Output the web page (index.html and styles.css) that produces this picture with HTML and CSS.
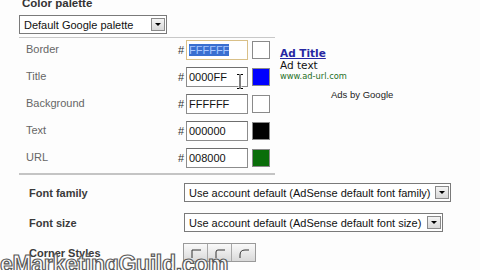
FILE: index.html
```html
<!DOCTYPE html>
<html>
<head>
    <title>Ad style</title>
    <link rel="stylesheet" href="styles.css">
</head>
<body>
    <div class="page">
        <h1 class="title">Color palette</h1>
        <div class="select palette-select">
            <span class="select-text">Default Google palette</span>
            <span class="arrow"></span>
        </div>

        <div class="colors">
            <div class="panel">
                <div class="color-row">
                    <span class="label">Border</span>
                    <span class="hash">#</span>
                    <span class="hex focused"><span class="sel">FFFFFF</span></span>
                    <span class="swatch" style="background:#ffffff"></span>
                </div>
                <div class="color-row">
                    <span class="label">Title</span>
                    <span class="hash">#</span>
                    <span class="hex">0000FF</span>
                    <span class="swatch" style="background:#0000ff"></span>
                </div>
                <div class="color-row">
                    <span class="label">Background</span>
                    <span class="hash">#</span>
                    <span class="hex">FFFFFF</span>
                    <span class="swatch" style="background:#ffffff"></span>
                </div>
                <div class="color-row">
                    <span class="label">Text</span>
                    <span class="hash">#</span>
                    <span class="hex">000000</span>
                    <span class="swatch" style="background:#000000"></span>
                </div>
                <div class="color-row">
                    <span class="label">URL</span>
                    <span class="hash">#</span>
                    <span class="hex">008000</span>
                    <span class="swatch" style="background:#0a6e0a"></span>
                </div>
            </div>

            <div class="preview">
                <a class="ad-title" href="#">Ad Title</a>
                <div class="ad-text">Ad text</div>
                <div class="ad-url">www.ad-url.com</div>
                <div class="ads-by">Ads by Google</div>
            </div>
        </div>

        <div class="font-rows">
            <div class="font-row">
                <span class="font-label">Font family</span>
                <div class="select family-select">
                    <span class="select-text">Use account default (AdSense default font family)</span>
                    <span class="arrow"></span>
                </div>
            </div>
            <div class="font-row">
                <span class="font-label">Font size</span>
                <div class="select size-select">
                    <span class="select-text">Use account default (AdSense default font size)</span>
                    <span class="arrow"></span>
                </div>
            </div>
            <div class="font-row">
                <span class="font-label">Corner Styles</span>
                <div class="corners">
                    <span class="corner"><svg width="12" height="10" viewBox="0 0 12 10"><path d="M2 10V2H11" fill="none" stroke="#333" stroke-width="1"/></svg></span>
                    <span class="corner"><svg width="12" height="10" viewBox="0 0 12 10"><path d="M2 10V4Q2 2 4 2H11" fill="none" stroke="#333" stroke-width="1"/></svg></span>
                    <span class="corner"><svg width="12" height="10" viewBox="0 0 12 10"><path d="M2 10V7Q2 2 7 2H11" fill="none" stroke="#333" stroke-width="1"/></svg></span>
                </div>
            </div>
        </div>
    </div>

    <!-- mouse cursor over the Title field -->
    <svg class="ibeam" width="8" height="17" viewBox="0 0 8 17">
        <path d="M1 1.5H3.5M4.5 1.5H7M4 2V15M1 15.5H3.5M4.5 15.5H7" stroke="#fff" stroke-width="3"/>
        <path d="M1 1.5H3.5M4.5 1.5H7M4 2V15M1 15.5H3.5M4.5 15.5H7" stroke="#000" stroke-width="1"/>
    </svg>

    <div class="watermark">eMarketingGuild.com</div>
</body>
</html>
```

FILE: styles.css
```css
html, body {
    margin: 0;
    background: #fdfdfd;
}
body {
    position: relative;
    width: 480px;
    height: 270px;
    overflow: hidden;
    font-family: "Liberation Sans", Arial, sans-serif;
    color: #222;
}
.page {
    padding-left: 19px;
}
.title {
    margin: -3px 0 0 3px;
    font-size: 11.5px;
    line-height: 12px;
    font-weight: bold;
    color: #333;
}

/* select boxes */
.select {
    display: flex;
    align-items: center;
    box-sizing: border-box;
    height: 19px;
    border: 1px solid #7a7a7a;
    background: #fff;
    font-size: 11px;
    color: #111;
}
.select-text {
    flex: 1;
    padding-left: 4px;
    white-space: nowrap;
}
.arrow {
    position: relative;
    box-sizing: border-box;
    width: 14px;
    height: 13px;
    margin-right: 1px;
    border: 1px solid #8a8a8a;
    background: linear-gradient(#f4f4f4, #d8d8d8);
}
.arrow::after {
    content: "";
    position: absolute;
    left: 3px;
    top: 4px;
    border-left: 3px solid transparent;
    border-right: 3px solid transparent;
    border-top: 3px solid #000;
}
.palette-select {
    width: 148px;
    margin-top: 6px;
}
.family-select {
    width: 267px;
}
.size-select {
    width: 259px;
}

/* colour panel */
.colors {
    display: flex;
    margin-top: 3px;
}
.panel {
    width: 256px;
    box-sizing: border-box;
    padding: 2px 0 5px 7px;
    border-top: 1px solid #c8c8c8;
    border-bottom: 2px solid #c4c4c4;
    display: flex;
    flex-direction: column;
    gap: 7px;
}
.color-row {
    display: grid;
    grid-template-columns: 152px 8px 62px 18px;
    column-gap: 0;
    align-items: center;
    height: 20px;
}
.label {
    font-size: 11px;
    color: #666;
    margin-top: -2px;
}
.hash {
    font-size: 11px;
    color: #333;
}
.hex {
    box-sizing: border-box;
    height: 20px;
    padding: 0 2px;
    border: 1px solid #8c8c8c;
    border-top-color: #6e6e6e;
    background: #fff;
    font-size: 11px;
    line-height: 18px;
    color: #111;
}
.hex.focused {
    border-color: #d9c088;
}
.sel {
    background: #3a6fd0;
    color: #a9c8ff;
}
.swatch {
    width: 18px;
    height: 18px;
    box-sizing: border-box;
    margin-left: 4px;
    border: 1px solid #8a8a8a;
}

/* ad preview */
.preview {
    padding: 10px 0 0 5px;
    font-family: "DejaVu Sans", Verdana, sans-serif;
}
.ad-title {
    display: block;
    font-size: 10.5px;
    line-height: 12px;
    font-weight: bold;
    color: #2727a3;
}
.ad-text {
    font-size: 10.5px;
    line-height: 12px;
    color: #111;
}
.ad-url {
    font-size: 8.3px;
    line-height: 11px;
    color: #1f6f1f;
}
.ads-by {
    margin: 7px 0 0 51px;
    font-family: "Liberation Sans", Arial, sans-serif;
    font-size: 9.5px;
    color: #222;
}

/* font settings */
.font-rows {
    display: flex;
    flex-direction: column;
    gap: 11px;
    margin-top: 8px;
}
.font-row {
    display: grid;
    grid-template-columns: 155px auto;
    align-items: center;
    padding-left: 10px;
    height: 19px;
}
.font-label {
    font-size: 11px;
    font-weight: bold;
    color: #3a3a3a;
}
.corners {
    display: flex;
    width: max-content;
    margin-left: -1px;
    border: 1px solid #9a9a9a;
}
.corner {
    display: flex;
    align-items: center;
    justify-content: center;
    width: 23px;
    height: 17px;
    background: linear-gradient(#fafafa, #d9d9d9);
    border-right: 1px solid #a8a8a8;
}
.corner:last-child {
    border-right: none;
}

/* overlays */
.ibeam {
    position: absolute;
    left: 236px;
    top: 73px;
}
.watermark {
    position: absolute;
    left: 0;
    top: 251px;
    font-family: "Liberation Sans", Arial, sans-serif;
    font-size: 23px;
    font-weight: bold;
    letter-spacing: -0.3px;
    color: rgba(255, 255, 255, 0.8);
    -webkit-text-stroke: 1.2px #5a5a5a;
}
```
